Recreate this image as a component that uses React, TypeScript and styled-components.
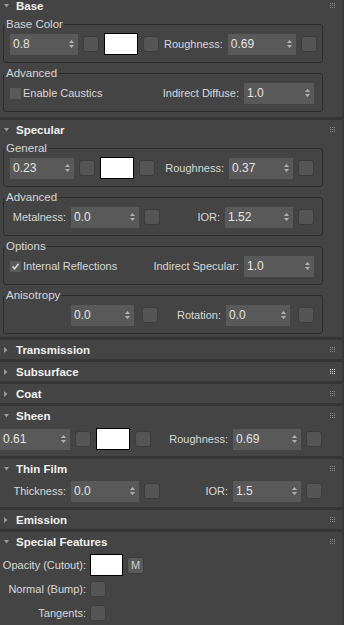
import React from "react";
import styled, { createGlobalStyle } from "styled-components";

const GlobalStyle = createGlobalStyle`
  html, body {
    margin: 0;
    padding: 0;
    background: #383838;
  }
  body {
    font-family: "Liberation Sans", Arial, sans-serif;
    font-size: 11px;
    color: #d8d8d8;
    overflow: hidden;
  }
`;

type SpinnerProps = { value: string; width: number };

const Spinner: React.FC<SpinnerProps> = ({ value, width }) => (
  <SpinBox $w={width}>
    <SpinValue>{value}</SpinValue>
    <svg width="5" height="8" viewBox="0 0 5 8">
      <path d="M2.5 0L5 3H0z M0 5h5L2.5 8z" fill="#b2b2b2" />
    </svg>
  </SpinBox>
);

const Arrow: React.FC<{ open?: boolean }> = ({ open }) => (
  <ArrowCell>
    {open ? (
      <svg width="5" height="4" viewBox="0 0 5 4">
        <path d="M0 0h5L2.5 3.5z" fill="#9a9a9a" />
      </svg>
    ) : (
      <svg width="4" height="6" viewBox="0 0 4 6">
        <path d="M0 0L3.5 3L0 6z" fill="#9a9a9a" />
      </svg>
    )}
  </ArrowCell>
);

const Grip: React.FC<{ hot?: boolean }> = ({ hot }) => (
  <svg width="5" height="5" viewBox="0 0 5 5">
    {[0, 2, 4].map((y) =>
      [0, 2, 4].map((x) => (
        <rect key={`${x}-${y}`} x={x} y={y} width="1" height="1" fill={hot ? "#e8e8e8" : "#8e8e8e"} />
      ))
    )}
  </svg>
);

type RolloutProps = { title: string; open?: boolean; hot?: boolean; children?: React.ReactNode };

const Rollout: React.FC<RolloutProps> = ({ title, open, hot, children }) => (
  <RolloutBox>
    <Header>
      <Arrow open={open} />
      <Title>{title}</Title>
      <Grip hot={hot} />
    </Header>
    {children}
  </RolloutBox>
);

const Check: React.FC<{ checked?: boolean; label: string }> = ({ checked, label }) => (
  <CheckRow>
    <CheckBox>
      {checked && (
        <svg width="9" height="9" viewBox="0 0 9 9">
          <path d="M1.5 4.5L3.6 6.8L7.6 1.8" stroke="#d6d6d6" strokeWidth="1.6" fill="none" />
        </svg>
      )}
    </CheckBox>
    {label}
  </CheckRow>
);

export default function App() {
  return (
    <>
      <GlobalStyle />
      <Panel>
        <Stack>
          <Rollout title="Base" open>
            <Content $top={1} $bottom={5}>
              <Group>
                <Legend>Base Color</Legend>
                <Row>
                  <Spinner value="0.8" width={68} />
                  <MapButton />
                  <Swatch />
                  <MapButton />
                  <FlexLabel>Roughness:</FlexLabel>
                  <Spinner value="0.69" width={68} />
                  <MapButton />
                </Row>
              </Group>
              <Group>
                <Legend>Advanced</Legend>
                <Row>
                  <Check label="Enable Caustics" />
                  <FlexLabel>Indirect Diffuse:</FlexLabel>
                  <Spinner value="1.0" width={70} />
                </Row>
              </Group>
            </Content>
          </Rollout>

          <Rollout title="Specular" open>
            <Content $top={1} $bottom={3}>
              <Group>
                <Legend>General</Legend>
                <Row>
                  <Spinner value="0.23" width={64} />
                  <MapButton />
                  <Swatch />
                  <MapButton />
                  <FlexLabel>Roughness:</FlexLabel>
                  <Spinner value="0.37" width={64} />
                  <MapButton />
                </Row>
              </Group>
              <Group>
                <Legend>Advanced</Legend>
                <Row>
                  <FixedLabel $w={56}>Metalness:</FixedLabel>
                  <Spinner value="0.0" width={68} />
                  <MapButton />
                  <FlexLabel>IOR:</FlexLabel>
                  <Spinner value="1.52" width={68} />
                  <MapButton />
                </Row>
              </Group>
              <Group>
                <Legend>Options</Legend>
                <Row>
                  <Check checked label="Internal Reflections" />
                  <FlexLabel>Indirect Specular:</FlexLabel>
                  <Spinner value="1.0" width={70} />
                </Row>
              </Group>
              <Group>
                <Legend>Anisotropy</Legend>
                <Row>
                  <FixedLabel $w={56} />
                  <Spinner value="0.0" width={63} />
                  <MapButton $ml={3} />
                  <FlexLabel>Rotation:</FlexLabel>
                  <Spinner value="0.0" width={64} />
                  <MapButton $ml={3} />
                </Row>
              </Group>
            </Content>
          </Rollout>

          <Rollout title="Transmission" />
          <Rollout title="Subsurface" hot />
          <Rollout title="Coat" />

          <Rollout title="Sheen" open>
            <Content $top={3} $bottom={6}>
              <LooseRow>
                <Spinner value="0.61" width={70} />
                <MapButton />
                <Swatch />
                <MapButton />
                <FlexLabel>Roughness:</FlexLabel>
                <Spinner value="0.69" width={68} />
                <MapButton />
              </LooseRow>
            </Content>
          </Rollout>

          <Rollout title="Thin Film" open>
            <Content $top={2} $bottom={5}>
              <LooseRow>
                <FixedLabel $w={66}>Thickness:</FixedLabel>
                <Spinner value="0.0" width={68} />
                <MapButton />
                <FlexLabel>IOR:</FlexLabel>
                <Spinner value="1.5" width={68} />
                <MapButton />
              </LooseRow>
            </Content>
          </Rollout>

          <Rollout title="Emission" />

          <Rollout title="Special Features" open>
            <Content $top={3} $bottom={4}>
              <FeatureList>
                <FeatureRow>
                  <FixedLabel $w={86}>Opacity (Cutout):</FixedLabel>
                  <Swatch $w={33} />
                  <LetterButton>M</LetterButton>
                </FeatureRow>
                <FeatureRow>
                  <FixedLabel $w={86}>Normal (Bump):</FixedLabel>
                  <MapButton />
                </FeatureRow>
                <FeatureRow>
                  <FixedLabel $w={86}>Tangents:</FixedLabel>
                  <MapButton />
                </FeatureRow>
              </FeatureList>
            </Content>
          </Rollout>
        </Stack>
      </Panel>
    </>
  );
}

// Styled Components
const Panel = styled.div`
  width: 342px;
  height: 625px;
  overflow: hidden;
  background: #353535;
`;

const Stack = styled.div`
  display: flex;
  flex-direction: column;
  gap: 3px;
  margin-top: -4px;
`;

const RolloutBox = styled.section`
  background: #444444;
`;

const Header = styled.div`
  height: 19px;
  display: flex;
  align-items: center;
  padding: 0 7px 0 4px;
`;

const ArrowCell = styled.span`
  width: 12px;
  display: flex;
  align-items: center;
`;

const Title = styled.span`
  flex: 1;
  font-weight: bold;
  font-size: 11.5px;
  color: #f0f0f0;
`;

const Content = styled.div<{ $top: number; $bottom: number }>`
  display: flex;
  flex-direction: column;
  gap: 2px;
  padding: ${(p) => p.$top}px 0 ${(p) => p.$bottom}px;
`;

const Group = styled.fieldset`
  margin: 0 0 0 3px;
  width: 320px;
  box-sizing: border-box;
  border: 1px solid #2c2c2c;
  border-radius: 3px;
  padding: 1px 8px 7px 6px;
  min-width: 0;
`;

const Legend = styled.legend`
  margin-left: -5px;
  padding: 0 1px;
  font-size: 11.5px;
  line-height: 16px;
  color: #d6d6d6;
`;

const Row = styled.div`
  display: flex;
  align-items: center;
  gap: 5px;
  height: 22px;
`;

const LooseRow = styled(Row)`
  padding-right: 20px;
`;

const FlexLabel = styled.span`
  flex: 1;
  text-align: right;
  white-space: nowrap;
`;

const FixedLabel = styled.span<{ $w: number }>`
  width: ${(p) => p.$w}px;
  flex: none;
  text-align: right;
  white-space: nowrap;
`;

const SpinBox = styled.div<{ $w: number }>`
  width: ${(p) => p.$w}px;
  height: 21px;
  flex: none;
  box-sizing: border-box;
  display: flex;
  align-items: center;
  padding: 0 4px 0 3px;
  background: #595959;
  color: #e4e4e4;
  font-size: 12px;
`;

const SpinValue = styled.span`
  flex: 1;
`;

const MapButton = styled.div<{ $ml?: number }>`
  width: 16px;
  height: 16px;
  flex: none;
  box-sizing: border-box;
  margin-left: ${(p) => p.$ml ?? 0}px;
  background: #555555;
  border: 1px solid #3c3c3c;
  border-radius: 3px;
`;

const Swatch = styled.div<{ $w?: number }>`
  width: ${(p) => p.$w ?? 34}px;
  height: 22px;
  flex: none;
  box-sizing: border-box;
  background: #ffffff;
  border: 1px solid #000000;
`;

const CheckRow = styled.label`
  display: flex;
  align-items: center;
  gap: 2px;
  white-space: nowrap;
`;

const CheckBox = styled.span`
  width: 11px;
  height: 11px;
  flex: none;
  display: flex;
  align-items: center;
  justify-content: center;
  background: #5a5a5a;
`;

const FeatureList = styled.div`
  display: flex;
  flex-direction: column;
  gap: 2px;
`;

const FeatureRow = styled.div`
  display: flex;
  align-items: center;
  gap: 4px;
  height: 22px;
`;

const LetterButton = styled.div`
  width: 17px;
  height: 17px;
  box-sizing: border-box;
  display: flex;
  align-items: center;
  justify-content: center;
  background: #5a5a5a;
  border: 1px solid #3c3c3c;
  border-radius: 3px;
  font-size: 11px;
  color: #cfcfcf;
`;
